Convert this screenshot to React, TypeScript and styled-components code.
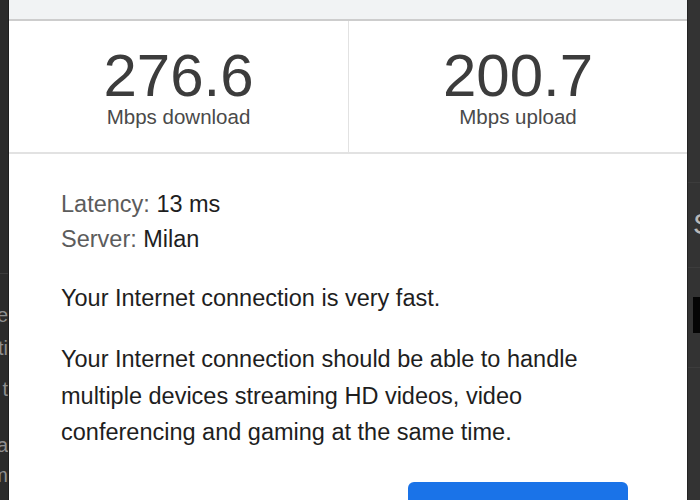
import styled, { createGlobalStyle } from "styled-components";

const GlobalStyle = createGlobalStyle`
  html, body {
    margin: 0;
    padding: 0;
    height: 500px;
    overflow: hidden;
    background: #2e2e2e;
    font-family: "Liberation Sans", Arial, sans-serif;
  }
`;

const stats = [
  { value: "276.6", label: "Mbps download" },
  { value: "200.7", label: "Mbps upload" },
];

const leftGlyphs = [
  { text: "e", height: 33 },
  { text: "ti", height: 41 },
  { text: "t", height: 56 },
  { text: "a", height: 30 },
  { text: "m", height: 30 },
];

function App(): JSX.Element {
  return (
    <>
      <GlobalStyle />
      <Screen>
        <LeftEdge>
          <EdgeRule $top={273} />
          {leftGlyphs.map((g, i) => (
            <EdgeGlyph key={i} $top={i === 0 ? 26 : 0} $height={g.height}>
              <span>{g.text}</span>
            </EdgeGlyph>
          ))}
        </LeftEdge>

        <Dialog>
          <Header />
          <Stats>
            {stats.map((s) => (
              <Stat key={s.label}>
                <Value>{s.value}</Value>
                <Label>{s.label}</Label>
              </Stat>
            ))}
          </Stats>

          <Body>
            <Meta>
              <div>
                <MetaKey>Latency:</MetaKey> <MetaValue>13 ms</MetaValue>
              </div>
              <div>
                <MetaKey>Server:</MetaKey> <MetaValue>Milan</MetaValue>
              </div>
            </Meta>
            <Paragraph>Your Internet connection is very fast.</Paragraph>
            <Paragraph>
              Your Internet connection should be able to handle multiple
              devices streaming HD videos, video conferencing and gaming at the
              same time.
            </Paragraph>
            <Actions>
              <PrimaryButton aria-label="Continue" />
            </Actions>
          </Body>
        </Dialog>

        <RightEdge>
          <EdgeRule $top={182} />
          <EdgeLetter>S</EdgeLetter>
          <EdgeRule $top={0} />
          <EdgeBlock />
          <EdgeRule $top={34} />
        </RightEdge>
      </Screen>
    </>
  );
}

export default App;

const Screen = styled.div`
  display: flex;
  width: 700px;
  height: 500px;
  overflow: hidden;
`;

const LeftEdge = styled.div`
  width: 8px;
  flex-shrink: 0;
  background: #2b2b2b;
  border-right: 1px solid #1e1e1e;
  overflow: hidden;
  display: flex;
  flex-direction: column;
`;

const EdgeRule = styled.div<{ $top: number }>`
  height: 1px;
  margin-top: ${(p) => p.$top}px;
  background: #3c3c3c;
  flex-shrink: 0;
`;

const EdgeGlyph = styled.div<{ $top: number; $height: number }>`
  display: flex;
  justify-content: flex-end;
  margin-top: ${(p) => p.$top}px;
  height: ${(p) => p.$height}px;
  line-height: 30px;
  font-size: 20px;
  color: #8f8f8f;
  flex-shrink: 0;

  span {
    flex-shrink: 0;
    white-space: nowrap;
  }
`;

const Dialog = styled.div`
  width: 678px;
  flex-shrink: 0;
  background: #ffffff;
  display: flex;
  flex-direction: column;
  overflow: hidden;

  & > * {
    flex-shrink: 0;
  }
`;

const Header = styled.div`
  height: 19px;
  background: #f1f3f4;
  border-bottom: 2px solid #cdcdcd;
`;

const Stats = styled.div`
  display: grid;
  grid-template-columns: 1fr 1fr;
  border-bottom: 2px solid #e2e2e2;
`;

const Stat = styled.div`
  display: flex;
  flex-direction: column;
  align-items: center;
  padding: 26px 0 25px;
  height: 80px;

  & + & {
    border-left: 1px solid #e2e2e2;
  }
`;

const Value = styled.div`
  font-size: 60px;
  line-height: 58px;
  color: #3c3c3c;
`;

const Label = styled.div`
  font-size: 20.5px;
  line-height: 22px;
  margin-top: 1px;
  color: #4a4a4a;
`;

const Body = styled.div`
  padding: 33px 59px 0 52px;
  display: flex;
  flex-direction: column;
`;

const Meta = styled.div`
  font-size: 23.5px;
  line-height: 34.5px;
`;

const MetaKey = styled.span`
  color: #5c5c5c;
`;

const MetaValue = styled.span`
  color: #1e1e1e;
`;

const Paragraph = styled.p`
  margin: 24px 0 0;
  max-width: 540px;
  font-size: 23.5px;
  line-height: 36.8px;
  color: #1e1e1e;
`;

const Actions = styled.div`
  display: flex;
  justify-content: flex-end;
  margin-top: 31px;
`;

const PrimaryButton = styled.button`
  width: 220px;
  height: 44px;
  border: none;
  border-radius: 6px;
  background: #1a73e8;
  cursor: pointer;
`;

const RightEdge = styled.div`
  flex: 1;
  background: #333333;
  border-left: 1px solid #232323;
  overflow: hidden;
  display: flex;
  flex-direction: column;
`;

const EdgeLetter = styled.div`
  height: 58px;
  padding: 26px 0 0 5px;
  font-size: 30px;
  line-height: 30px;
  color: #b8b8b8;
`;

const EdgeBlock = styled.div`
  margin: 29px 0 0 5px;
  height: 36px;
  background: #050505;
`;
